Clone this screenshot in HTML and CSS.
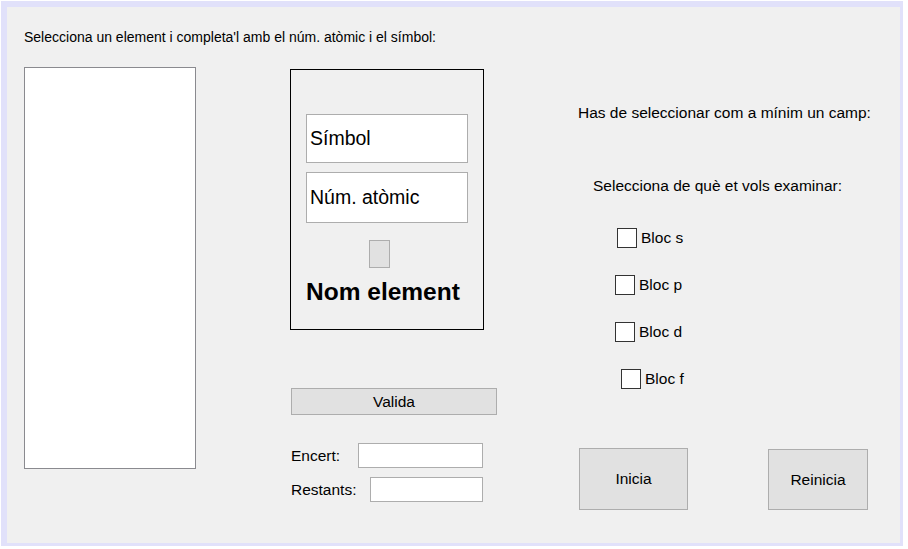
FILE: index.html
```html
<!DOCTYPE html>
<html lang="ca">
<head>
<meta charset="utf-8">
<title>Taula periòdica</title>
<link rel="stylesheet" href="styles.css">
</head>
<body>
<div class="frame">
  <div class="panel">
    <p class="title">Selecciona un element i completa'l amb el núm. atòmic i el símbol:</p>
    <div class="main">
      <div class="list"></div>
      <div class="center">
        <div class="card">
          <div class="field field-symbol">Símbol</div>
          <div class="field field-number">Núm. atòmic</div>
          <div class="swatch"></div>
          <div class="name">Nom element</div>
        </div>
        <button class="btn valida">Valida</button>
        <div class="score-row encert">
          <span class="score-label">Encert:</span>
          <span class="score-input"></span>
        </div>
        <div class="score-row restants">
          <span class="score-label">Restants:</span>
          <span class="score-input"></span>
        </div>
      </div>
      <div class="right">
        <p class="hint">Has de seleccionar com a mínim un camp:</p>
        <p class="hint hint-two">Selecciona de què et vols examinar:</p>
        <div class="check check-s"><span class="box"></span><span class="check-label">Bloc s</span></div>
        <div class="check check-p"><span class="box"></span><span class="check-label">Bloc p</span></div>
        <div class="check check-d"><span class="box"></span><span class="check-label">Bloc d</span></div>
        <div class="check check-f"><span class="box"></span><span class="check-label">Bloc f</span></div>
        <div class="actions">
          <button class="btn inicia">Inicia</button>
          <button class="btn reinicia">Reinicia</button>
        </div>
      </div>
    </div>
  </div>
</div>
</body>
</html>
```
FILE: styles.css
```css
* {
  box-sizing: border-box;
}

html, body {
  margin: 0;
  padding: 0;
  background: #ffffff;
}

body {
  font-family: "Liberation Sans", Arial, sans-serif;
  color: #000;
}

.frame {
  margin: 1px 0 0 1px;
  width: 902px;
  height: 545px;
  border-style: solid;
  border-color: #e1e1fa;
  border-width: 6px 3px 3px 6px;
}

.panel {
  width: 100%;
  height: 100%;
  background: #f0f0f0;
  padding: 22px 0 0 17px;
}

.title {
  margin: 0;
  font-size: 14px;
  line-height: 16px;
  height: 16px;
}

.main {
  display: flex;
  align-items: flex-start;
  margin-top: 22px;
}

.list {
  width: 172px;
  height: 402px;
  background: #fff;
  border: 1px solid #8a8a8f;
  flex: none;
}

.center {
  width: 207px;
  margin-left: 94px;
  flex: none;
  display: flex;
  flex-direction: column;
}

.card {
  margin-top: 2px;
  width: 194px;
  height: 261px;
  border: 1px solid #000;
  padding: 44px 0 0 15px;
  display: flex;
  flex-direction: column;
}

.field {
  width: 162px;
  background: #fff;
  border: 1px solid #adadad;
  font-size: 19.5px;
  padding-left: 3px;
  display: flex;
  align-items: center;
}

.field-symbol {
  height: 49px;
}

.field-number {
  height: 51px;
  margin-top: 9px;
}

.swatch {
  margin: 17px 0 0 63px;
  width: 21px;
  height: 28px;
  background: #e1e1e1;
  border: 1px solid #adadad;
}

.name {
  margin-top: 10px;
  font-size: 24.5px;
  font-weight: bold;
  line-height: 28px;
}

.btn {
  font-family: "Liberation Sans", Arial, sans-serif;
  font-size: 15.5px;
  color: #000;
  background: #e1e1e1;
  border: 1px solid #adadad;
  padding: 0;
  display: flex;
  align-items: center;
  justify-content: center;
}

.valida {
  margin: 58px 0 0 1px;
  width: 206px;
  height: 27px;
}

.score-row {
  display: flex;
  align-items: center;
  margin-left: 1px;
  font-size: 15.5px;
  height: 25px;
}

.encert {
  margin-top: 28px;
}

.restants {
  margin-top: 9px;
}

.score-input {
  height: 25px;
  background: #fff;
  border: 1px solid #adadad;
}

.encert .score-label {
  width: 67px;
}

.encert .score-input {
  width: 125px;
}

.restants .score-label {
  width: 79px;
}

.restants .score-input {
  width: 113px;
}

.right {
  margin-left: 81px;
  flex: 1;
  display: flex;
  flex-direction: column;
  align-items: flex-start;
}

.hint {
  margin: 37px 0 0 0;
  font-size: 15.5px;
  line-height: 18px;
}

.hint-two {
  margin: 55px 0 0 15px;
}

.check {
  display: flex;
  align-items: center;
  height: 20px;
  font-size: 15.5px;
  margin-top: 27px;
}

.box {
  width: 20px;
  height: 20px;
  background: #fff;
  border: 1px solid #333;
  margin-right: 4px;
  flex: none;
}

.check-label {
  line-height: 18px;
}

.check-s {
  margin: 33px 0 0 39px;
}

.check-p {
  margin-left: 37px;
}

.check-d {
  margin-left: 37px;
}

.check-f {
  margin-left: 43px;
}

.actions {
  display: flex;
  align-items: flex-start;
  margin: 59px 0 0 1px;
}

.inicia {
  width: 109px;
  height: 62px;
}

.reinicia {
  margin: 1px 0 0 80px;
  width: 100px;
  height: 61px;
}
```
